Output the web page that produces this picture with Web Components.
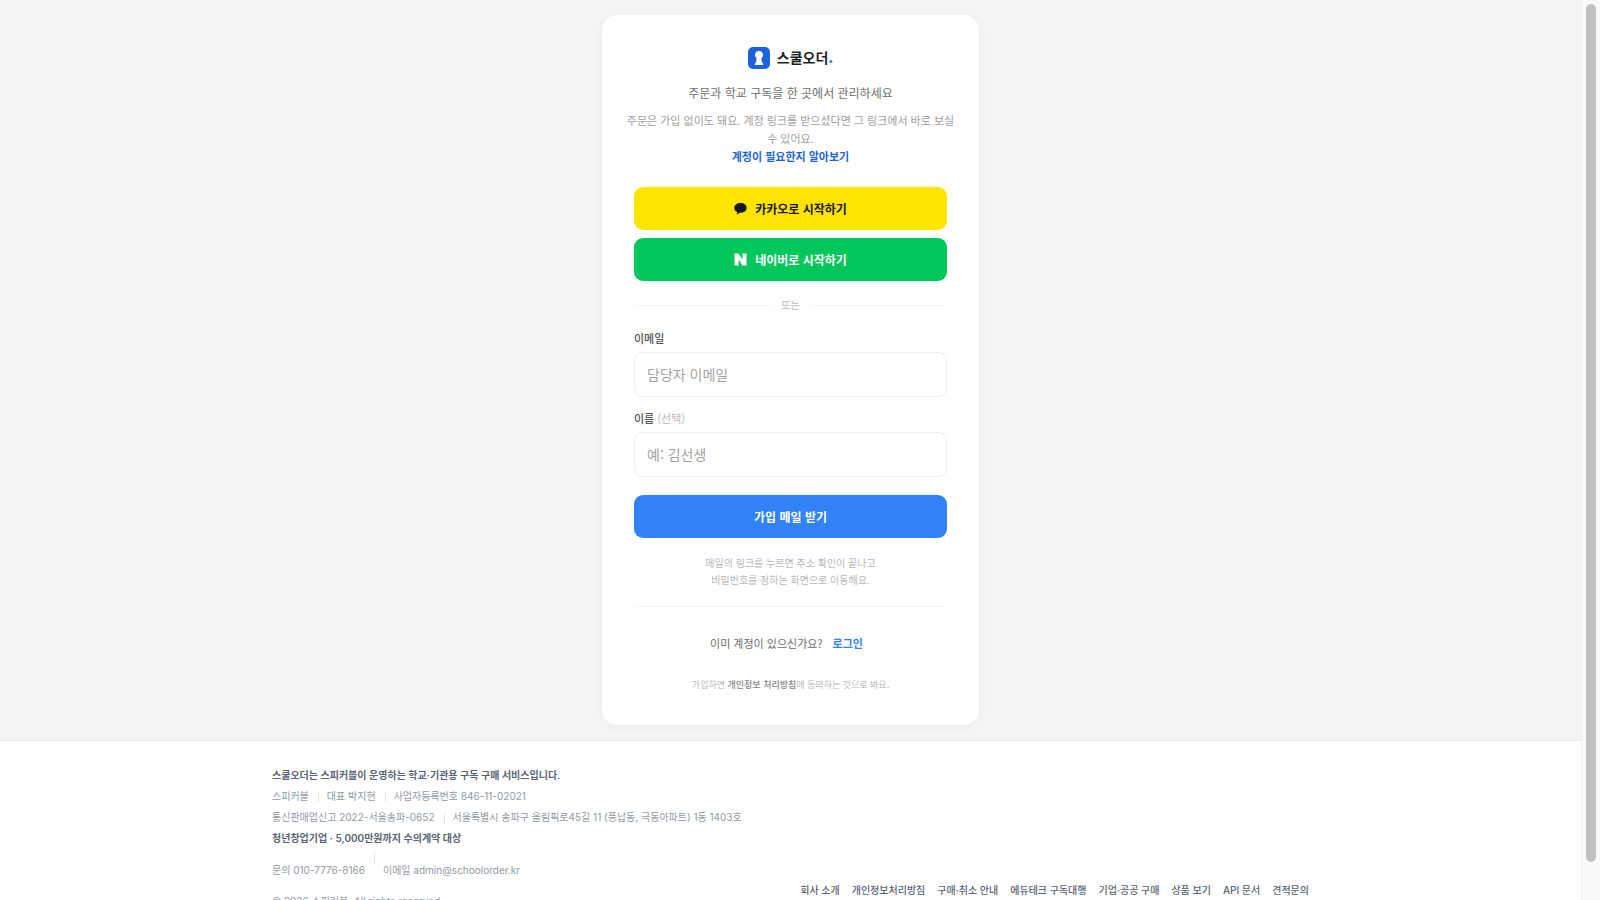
<!DOCTYPE html>
<html lang="ko">
<head>
<meta charset="utf-8">
<meta name="viewport" content="width=device-width, initial-scale=1">
<title>스쿨오더 회원가입</title>
<style>
  :root {
    --bg: #f2f4f6;
    --blue: #3182f6;
    --blue-dark: #1b64da;
    --line: #f4f5f6;
    --faint: #b8b8b8;
  }
  body {
    margin: 0;
    background: var(--bg);
    color: #191f28;
    font-family: "Noto Sans CJK KR", "Noto Sans", sans-serif;
    font-size: 11px;
    line-height: 18px;
  }
</style>
</head>
<body>
<app-shell>
  <signup-card></signup-card>
  <site-footer slot="footer"></site-footer>
</app-shell>

<script>
  const define = (name, html, setup) => {
    customElements.define(name, class extends HTMLElement {
      constructor() {
        super();
        const template = document.createElement('template');
        template.innerHTML = html;
        this.attachShadow({ mode: 'open' }).append(template.content.cloneNode(true));
        if (setup) setup(this, this.shadowRoot);
      }
    });
  };

  define('scroll-rail', `
    <style>
      :host { display: block; box-sizing: border-box; padding: 4px 4px 38px; background: #fafafa; border-left: 1px solid #ededed; }
      div { height: 100%; border-radius: 5px; background: #c1c1c1; }
    </style>
    <div></div>`);

  define('app-shell', `
    <style>
      :host { display: grid; grid-template-columns: minmax(0, 1fr) 19px; height: 100vh; overflow: hidden; }
      .page { display: flex; flex-direction: column; min-height: 0; overflow: hidden; }
      main { display: flex; justify-content: center; flex: none; padding: 15px; }
      ::slotted(site-footer) { flex: 1 0 auto; }
    </style>
    <div class="page">
      <main><slot></slot></main>
      <slot name="footer"></slot>
    </div>
    <scroll-rail></scroll-rail>`);

  define('brand-logo', `
    <style>
      :host { display: flex; align-items: center; justify-content: center; gap: 7px; height: 22px; font-size: 14px; font-weight: 700; line-height: 20px; }
      svg { display: block; width: 22px; height: 22px; }
      span { padding-bottom: 2px; }
      b { color: var(--blue); }
    </style>
    <svg viewBox="0 0 22 22" aria-hidden="true">
      <rect width="22" height="22" rx="5" fill="#1b64da"/>
      <path fill="#fff" d="M11 3.700a4.100 4.100 0 0 0-2.500 7.300c.3.300.3.600-.1.700-.4.200-.3.800.2.900-.1 1.500-.7 3-1.800 4.500-.3.500-.1.800.4.800h7.600c.5 0 .7-.3.400-.8-1.100-1.500-1.700-3-1.800-4.500.5-.1.600-.7.200-.9-.4-.1-.4-.4-.1-.7A4.100 4.100 0 0 0 11 3.700z"/>
    </svg>
    <span>스쿨오더<b>.</b></span>`);

  define('action-button', `
    <style>
      :host { display: block; }
      button {
        display: flex; align-items: center; justify-content: center; gap: 8px;
        width: 100%; height: 43px; padding: 0; border: 0; border-radius: 9px;
        background: var(--blue); color: #fff;
        font: 600 12px/18px "Noto Sans CJK KR", sans-serif; cursor: pointer;
      }
      :host([kind="kakao"]) button { background: #fee500; color: #191919; }
      :host([kind="naver"]) button { background: #03c75a; }
      ::slotted(svg) { display: block; width: 13px; height: 13px; }
    </style>
    <button type="button"><slot name="icon"></slot><span><slot></slot></span></button>`);

  define('text-field', `
    <style>
      :host { display: block; }
      label { display: block; margin-bottom: 5px; color: #555; font-weight: 500; }
      small { color: var(--faint); font-size: 11px; font-weight: 400; }
      input {
        display: block; box-sizing: border-box; width: 100%; height: 45px; padding: 0 12px 2px;
        border: 1px solid #f0f0f1; border-radius: 8px; background: #fff; outline: 0;
        color: #191f28; font: 400 14px/20px "Noto Sans CJK KR", sans-serif;
      }
      input::placeholder { color: #a3a3a3; opacity: 1; }
    </style>
    <label for="field"><span></span> <small></small></label>
    <input id="field">`,
    (host, root) => {
      root.querySelector('span').textContent = host.getAttribute('label');
      const note = root.querySelector('small');
      if (host.hasAttribute('note')) note.textContent = host.getAttribute('note');
      else note.remove();
      const input = root.querySelector('input');
      input.type = host.getAttribute('type') || 'text';
      input.placeholder = host.getAttribute('hint') || '';
    });

  define('or-divider', `
    <style>
      :host { display: flex; align-items: center; gap: 9px; color: var(--faint); font-size: 10px; }
      :host::before, :host::after { content: ""; flex: 1; height: 1px; background: var(--line); }
    </style>
    <slot></slot>`);

  define('signup-card', `
    <style>
      :host {
        display: block; box-sizing: border-box; width: 100%; max-width: 377px; padding: 32px;
        border-radius: 15px; background: #fff; box-shadow: 0 2px 12px rgba(0, 0, 0, .04);
        text-align: center;
      }
      p { margin: 0; }
      a { text-decoration: none; }
      .lead { margin-top: 14px; color: #707070; font-size: 12px; line-height: 20px; }
      .note { margin: 8px -12px 22px; color: #a0a0a0; }
      .note a { color: var(--blue-dark); font-weight: 600; }
      .social { display: grid; gap: 8px; }
      or-divider { margin: 15px 0; }
      form { display: grid; gap: 12px; text-align: left; }
      form action-button { margin-top: 6px; }
      .hint { margin-top: 16px; color: var(--faint); font-size: 10px; line-height: 17px; }
      hr { height: 1px; margin: 18px 0 27px; border: 0; background: var(--line); }
      .login { display: flex; justify-content: center; gap: 10px; padding-right: 8px; color: #6b6b6b; }
      .login a { color: var(--blue); font-weight: 600; }
      .terms { margin-top: 25px; color: var(--faint); font-size: 9px; line-height: 16px; }
      .terms a { color: #888; font-weight: 500; }
    </style>
    <brand-logo></brand-logo>
    <p class="lead">주문과 학교 구독을 한 곳에서 관리하세요</p>
    <p class="note">주문은 가입 없이도 돼요. 계정 링크를 받으셨다면 그 링크에서 바로 보실<br>수 있어요.<br><a href="#account">계정이 필요한지 알아보기</a></p>
    <div class="social">
      <action-button kind="kakao">
        <svg slot="icon" viewBox="0 0 13 13" aria-hidden="true"><path fill="#191919" d="M6.500 1C2.900 1 .3 3.100.3 5.900c0 1.900 1.200 3.400 3 4.200l-.5 2.100c-.1.3.2.5.4.3l2.500-1.800.8.1c3.600 0 6.200-2.100 6.200-4.900S10.100 1 6.500 1z"/></svg>
        카카오로 시작하기
      </action-button>
      <action-button kind="naver">
        <svg slot="icon" viewBox="0 0 13 13" aria-hidden="true"><path fill="#fff" d="M.5.5h4.100l3.800 6V.5h4.100v12H8.400l-3.800-6v6H.5z"/></svg>
        네이버로 시작하기
      </action-button>
    </div>
    <or-divider>또는</or-divider>
    <form>
      <text-field label="이메일" type="email" hint="담당자 이메일"></text-field>
      <text-field label="이름" note="(선택)" hint="예: 김선생"></text-field>
      <action-button>가입 메일 받기</action-button>
    </form>
    <p class="hint">메일의 링크를 누르면 주소 확인이 끝나고<br>비밀번호를 정하는 화면으로 이동해요.</p>
    <hr>
    <p class="login"><span>이미 계정이 있으신가요?</span><a href="#login">로그인</a></p>
    <p class="terms">가입하면 <a href="#privacy">개인정보 처리방침</a>에 동의하는 것으로 봐요.</p>`);

  define('info-row', `
    <style>
      :host { display: flex; align-items: center; }
      ::slotted(span:not(:first-child)) { margin-left: 9px; padding-left: 9px; background: linear-gradient(#dfe2e6, #dfe2e6) left center / 1px 10px no-repeat; }
      :host([raised]) ::slotted(span:not(:first-child)) { margin-top: -12px; padding-top: 12px; background-position: left 5px; }
    </style>
    <slot></slot>`);

  define('site-footer', `
    <style>
      :host { display: block; border-top: 1px solid #e8eaed; background: #fff; color: #929aa5; font-family: Inter, "Noto Sans CJK KR", sans-serif; font-size: 10px; line-height: 21px; }
      .inner { display: flex; justify-content: space-between; align-items: flex-end; gap: 24px; max-width: 1037px; margin: 0 auto; padding: 24px; }
      p { margin: 0; }
      strong { display: block; color: #5a6472; font-weight: 600; }
      info-row[raised] { margin-top: 11px; }
      .copy { margin-top: 10px; }
      nav { display: flex; gap: 12px; padding-bottom: 11px; }
      a { color: #5a6472; font-weight: 500; text-decoration: none; white-space: nowrap; }
    </style>
    <div class="inner">
      <div>
        <strong>스쿨오더는 스피커블이 운영하는 학교·기관용 구독 구매 서비스입니다.</strong>
        <info-row><span>스피커블</span><span>대표 박지현</span><span>사업자등록번호 846-11-02021</span></info-row>
        <info-row><span>통신판매업신고 2022-서울송파-0652</span><span>서울특별시 송파구 올림픽로45길 11 (풍납동, 극동아파트) 1동 1403호</span></info-row>
        <strong>청년창업기업 · 5,000만원까지 수의계약 대상</strong>
        <info-row raised><span>문의 010-7776-8166</span><span>이메일 admin@schoolorder.kr</span></info-row>
        <p class="copy">© 2026 스피커블. All rights reserved.</p>
      </div>
      <nav aria-label="바닥글">
        <a href="#about">회사 소개</a><a href="#privacy">개인정보처리방침</a><a href="#refund">구매·취소 안내</a><a href="#edutech">에듀테크 구독대행</a><a href="#business">기업·공공 구매</a><a href="#products">상품 보기</a><a href="#api">API 문서</a><a href="#quote">견적문의</a>
      </nav>
    </div>`);
</script>
</body>
</html>
